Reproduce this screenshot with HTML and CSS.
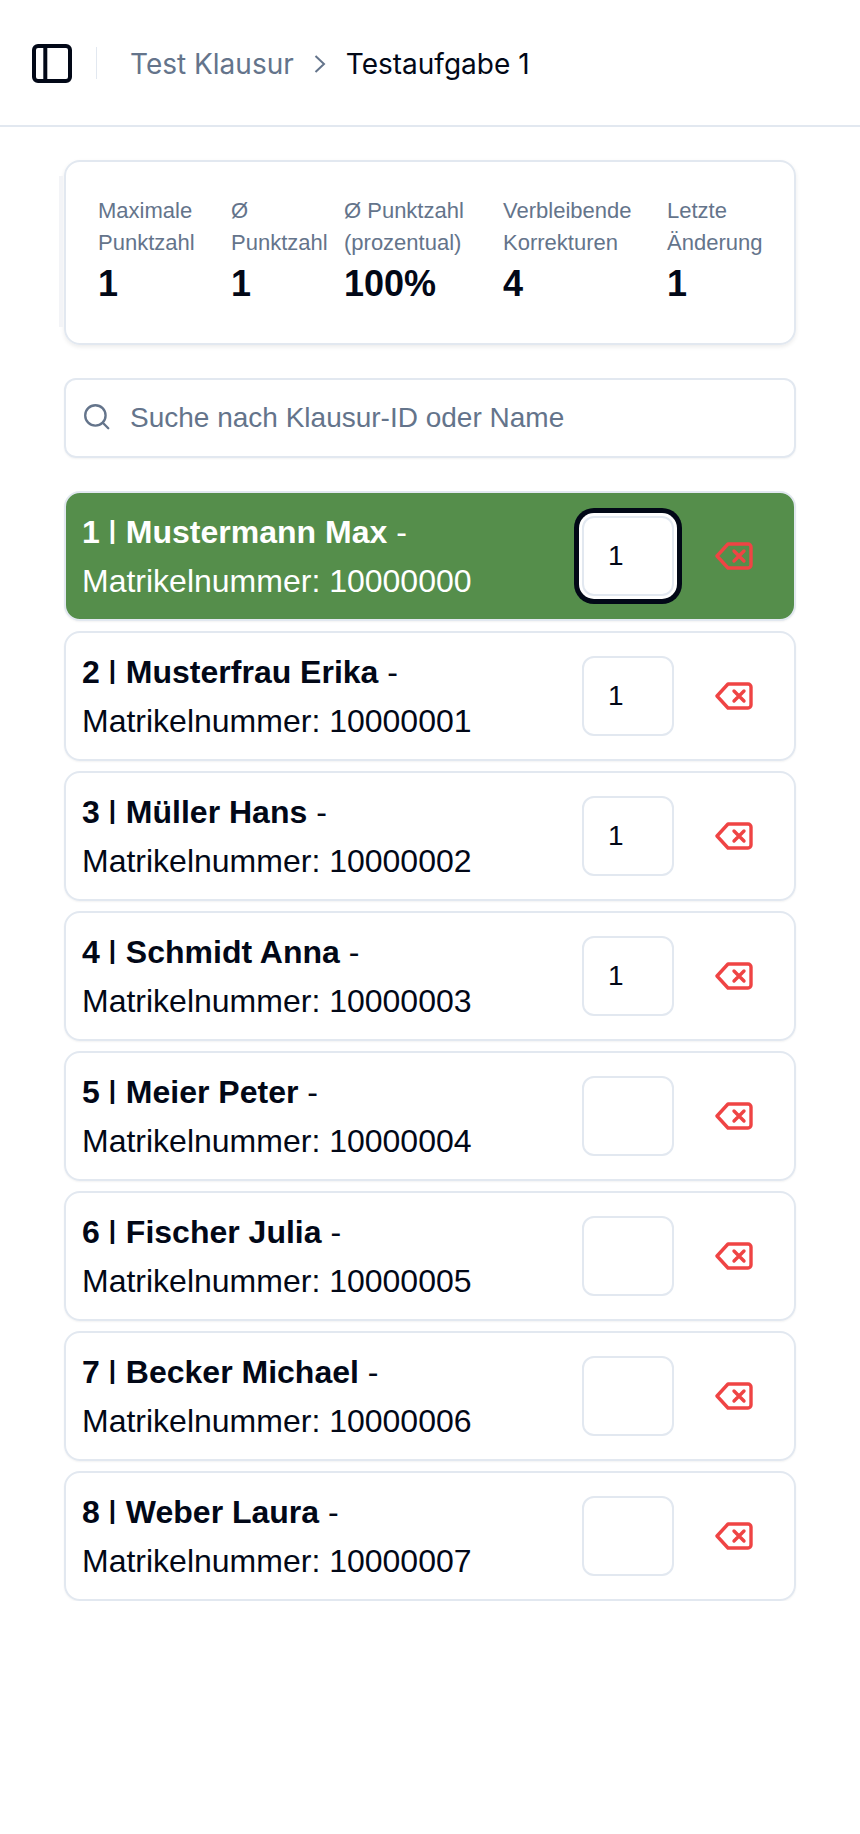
FILE: index.html
```html
<!DOCTYPE html>
<html lang="de">
<head>
  <meta charset="UTF-8">
  <title>Testaufgabe 1</title>
  <link rel="stylesheet" href="styles.css">
</head>
<body>

  <header class="topbar">
    <button class="sidebar-toggle" type="button" aria-label="Sidebar">
      <svg width="40" height="39" viewBox="0 0 40 39" fill="none" stroke="#020817" stroke-width="4" stroke-linejoin="round">
        <rect x="2" y="2" width="36" height="35" rx="4"></rect>
        <line x1="13.3" y1="2" x2="13.3" y2="37"></line>
      </svg>
    </button>
    <span class="divider"></span>
    <nav class="breadcrumb">
      <span class="crumb">Test Klausur</span>
      <svg class="crumb-sep" width="14" height="20" viewBox="0 0 14 20" fill="none" stroke="#64748b" stroke-width="2">
        <path d="M2.5 2 11 10l-8.5 8"></path>
      </svg>
      <span class="crumb-current">Testaufgabe 1</span>
    </nav>
  </header>

  <main class="content">
    <section class="stats">
      <div class="stat">
        <div class="stat-label">Maximale Punktzahl</div>
        <div class="stat-value">1</div>
      </div>
      <div class="stat">
        <div class="stat-label">Ø<br>Punktzahl</div>
        <div class="stat-value">1</div>
      </div>
      <div class="stat">
        <div class="stat-label">Ø Punktzahl (prozentual)</div>
        <div class="stat-value">100%</div>
      </div>
      <div class="stat">
        <div class="stat-label">Verbleibende Korrekturen</div>
        <div class="stat-value">4</div>
      </div>
      <div class="stat">
        <div class="stat-label">Letzte Änderung</div>
        <div class="stat-value">1</div>
      </div>
    </section>

    <div class="search">
      <svg width="30" height="30" viewBox="0 0 28 28" fill="none" stroke="#64748b" stroke-width="2.2" stroke-linecap="round">
        <circle cx="12.5" cy="12.5" r="9.5"></circle>
        <line x1="24.5" y1="24.5" x2="19.4" y2="19.4"></line>
      </svg>
      <input type="text" placeholder="Suche nach Klausur-ID oder Name">
    </div>

    <ul class="students">
      <li class="student active">
        <div class="student-info">
          <div class="student-name"><b>1</b> <span class="sep">|</span> <b>Mustermann Max</b> -</div>
          <div>Matrikelnummer: 10000000</div>
        </div>
        <input class="points focused" type="text" value="1">
        <button class="remove" type="button" aria-label="Löschen">
          <svg width="38" height="28" viewBox="0 0 38 28" fill="none" stroke="#ef4444" stroke-width="3.4" stroke-linecap="round" stroke-linejoin="round"><path d="M13 2h20a3 3 0 0 1 3 3v18a3 3 0 0 1-3 3H13L2 14z"></path><path d="m29 9-10 10M19 9l10 10"></path></svg>
        </button>
      </li>
      <li class="student">
        <div class="student-info">
          <div class="student-name"><b>2</b> <span class="sep">|</span> <b>Musterfrau Erika</b> -</div>
          <div>Matrikelnummer: 10000001</div>
        </div>
        <input class="points" type="text" value="1">
        <button class="remove" type="button" aria-label="Löschen">
          <svg width="38" height="28" viewBox="0 0 38 28" fill="none" stroke="#ef4444" stroke-width="3.4" stroke-linecap="round" stroke-linejoin="round"><path d="M13 2h20a3 3 0 0 1 3 3v18a3 3 0 0 1-3 3H13L2 14z"></path><path d="m29 9-10 10M19 9l10 10"></path></svg>
        </button>
      </li>
      <li class="student">
        <div class="student-info">
          <div class="student-name"><b>3</b> <span class="sep">|</span> <b>Müller Hans</b> -</div>
          <div>Matrikelnummer: 10000002</div>
        </div>
        <input class="points" type="text" value="1">
        <button class="remove" type="button" aria-label="Löschen">
          <svg width="38" height="28" viewBox="0 0 38 28" fill="none" stroke="#ef4444" stroke-width="3.4" stroke-linecap="round" stroke-linejoin="round"><path d="M13 2h20a3 3 0 0 1 3 3v18a3 3 0 0 1-3 3H13L2 14z"></path><path d="m29 9-10 10M19 9l10 10"></path></svg>
        </button>
      </li>
      <li class="student">
        <div class="student-info">
          <div class="student-name"><b>4</b> <span class="sep">|</span> <b>Schmidt Anna</b> -</div>
          <div>Matrikelnummer: 10000003</div>
        </div>
        <input class="points" type="text" value="1">
        <button class="remove" type="button" aria-label="Löschen">
          <svg width="38" height="28" viewBox="0 0 38 28" fill="none" stroke="#ef4444" stroke-width="3.4" stroke-linecap="round" stroke-linejoin="round"><path d="M13 2h20a3 3 0 0 1 3 3v18a3 3 0 0 1-3 3H13L2 14z"></path><path d="m29 9-10 10M19 9l10 10"></path></svg>
        </button>
      </li>
      <li class="student">
        <div class="student-info">
          <div class="student-name"><b>5</b> <span class="sep">|</span> <b>Meier Peter</b> -</div>
          <div>Matrikelnummer: 10000004</div>
        </div>
        <input class="points" type="text">
        <button class="remove" type="button" aria-label="Löschen">
          <svg width="38" height="28" viewBox="0 0 38 28" fill="none" stroke="#ef4444" stroke-width="3.4" stroke-linecap="round" stroke-linejoin="round"><path d="M13 2h20a3 3 0 0 1 3 3v18a3 3 0 0 1-3 3H13L2 14z"></path><path d="m29 9-10 10M19 9l10 10"></path></svg>
        </button>
      </li>
      <li class="student">
        <div class="student-info">
          <div class="student-name"><b>6</b> <span class="sep">|</span> <b>Fischer Julia</b> -</div>
          <div>Matrikelnummer: 10000005</div>
        </div>
        <input class="points" type="text">
        <button class="remove" type="button" aria-label="Löschen">
          <svg width="38" height="28" viewBox="0 0 38 28" fill="none" stroke="#ef4444" stroke-width="3.4" stroke-linecap="round" stroke-linejoin="round"><path d="M13 2h20a3 3 0 0 1 3 3v18a3 3 0 0 1-3 3H13L2 14z"></path><path d="m29 9-10 10M19 9l10 10"></path></svg>
        </button>
      </li>
      <li class="student">
        <div class="student-info">
          <div class="student-name"><b>7</b> <span class="sep">|</span> <b>Becker Michael</b> -</div>
          <div>Matrikelnummer: 10000006</div>
        </div>
        <input class="points" type="text">
        <button class="remove" type="button" aria-label="Löschen">
          <svg width="38" height="28" viewBox="0 0 38 28" fill="none" stroke="#ef4444" stroke-width="3.4" stroke-linecap="round" stroke-linejoin="round"><path d="M13 2h20a3 3 0 0 1 3 3v18a3 3 0 0 1-3 3H13L2 14z"></path><path d="m29 9-10 10M19 9l10 10"></path></svg>
        </button>
      </li>
      <li class="student">
        <div class="student-info">
          <div class="student-name"><b>8</b> <span class="sep">|</span> <b>Weber Laura</b> -</div>
          <div>Matrikelnummer: 10000007</div>
        </div>
        <input class="points" type="text">
        <button class="remove" type="button" aria-label="Löschen">
          <svg width="38" height="28" viewBox="0 0 38 28" fill="none" stroke="#ef4444" stroke-width="3.4" stroke-linecap="round" stroke-linejoin="round"><path d="M13 2h20a3 3 0 0 1 3 3v18a3 3 0 0 1-3 3H13L2 14z"></path><path d="m29 9-10 10M19 9l10 10"></path></svg>
        </button>
      </li>
    </ul>
  </main>

</body>
</html>
```

FILE: styles.css
```css
* {
  box-sizing: border-box;
}

body {
  margin: 0;
  background-color: white;
  color: #020817;
  font-family: "Liberation Sans", Arial, sans-serif;
}

.topbar {
  display: flex;
  align-items: center;
  height: 127px;
  padding: 1px 32px 0;
  border-bottom: 2px solid #e2e8f0;
}

.sidebar-toggle {
  display: flex;
  width: 40px;
  height: 39px;
  padding: 0;
  border: none;
  background: none;
}

.divider {
  width: 1px;
  height: 32px;
  margin: 0 33px 0 24px;
  background-color: #e2e8f0;
}

.breadcrumb {
  display: flex;
  align-items: center;
  gap: 19px;
  margin-top: 1px;
  font-family: Inter, sans-serif;
  font-size: 28px;
}

.crumb {
  color: #64748b;
}

.crumb-current {
  color: #020817;
}

.content {
  padding: 33px 64px 0;
}

.stats {
  position: relative;
  display: grid;
  grid-template-columns: 133px 113px 159px 164px 1fr;
  height: 185px;
  padding: 33px 0 0 32px;
  border: 2px solid #e2e8f0;
  border-radius: 16px;
  box-shadow: 0 2px 4px rgba(0, 0, 0, 0.08);
}

/* faint edge of the scroller that sticks out left of the card */
.stats::before {
  content: "";
  position: absolute;
  left: -7px;
  top: 14px;
  width: 4px;
  height: 151px;
  background-color: #f3f4f7;
}

.stat-label {
  width: 132px;
  font-size: 22px;
  line-height: 32px;
  color: #64748b;
}

.stat-value {
  margin-top: 5px;
  font-size: 36px;
  font-weight: bold;
  line-height: 40px;
}

.search {
  display: flex;
  align-items: center;
  gap: 18px;
  height: 80px;
  margin-top: 33px;
  padding: 0 16px;
  border: 2px solid #e2e8f0;
  border-radius: 12px;
  box-shadow: 0 1px 2px rgba(0, 0, 0, 0.05);
}

.search svg {
  margin-top: -2px;
}

.search input {
  flex: 1;
  border: none;
  outline: none;
  padding: 0;
  font-family: inherit;
  font-size: 28px;
}

.search input::placeholder {
  color: #64748b;
  opacity: 1;
}

.students {
  display: flex;
  flex-direction: column;
  gap: 10px;
  margin: 33px 0 0;
  padding: 0;
  list-style: none;
}

.student {
  display: flex;
  align-items: center;
  height: 130px;
  padding: 0 41px 0 16px;
  border: 2px solid #e2e8f0;
  border-radius: 16px;
  font-size: 32px;
  line-height: 49px;
  box-shadow: 0 1px 2px rgba(0, 0, 0, 0.05);
}

.student.active {
  background-color: #558e4b;
  color: white;
}

.student-info {
  flex: 1;
  padding-top: 2px;
}

.sep {
  padding-right: 1px;
  font-size: 26px;
  font-weight: bold;
  line-height: 1;
  vertical-align: 4px;
}

.points {
  width: 92px;
  height: 80px;
  margin-right: 1px;
  padding: 0 24px;
  border: 2px solid #e2e8f0;
  border-radius: 12px;
  background-color: white;
  color: #020817;
  font-family: inherit;
  font-size: 28px;
  outline: none;
}

.points.focused {
  box-shadow: 0 0 0 3px white, 0 0 0 8px #020817;
}

.remove {
  display: flex;
  margin-left: 40px;
  padding: 0;
  border: none;
  background: none;
}
```
